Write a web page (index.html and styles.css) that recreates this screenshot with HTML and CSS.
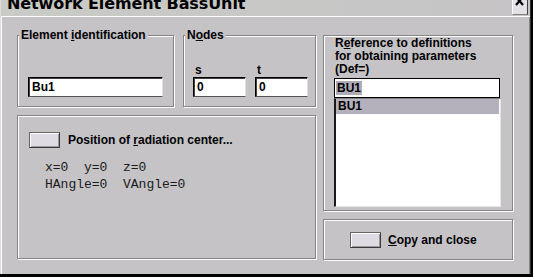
FILE: index.html
```html
<!DOCTYPE html>
<html lang="en">
<head>
    <meta charset="UTF-8">
    <title>Network Element BassUnit</title>
    <link rel="stylesheet" href="styles.css">
</head>
<body>
    <div class="window">
        <div class="titlebar">
            <span class="title">Network Element BassUnit</span>
            <span class="close">
                <svg width="14" height="14" viewBox="0 0 14 14"><path d="M3 -3 L10 5 M10 -3 L3 5" stroke="#000" stroke-width="2.2" fill="none"/></svg>
            </span>
        </div>

        <div class="content">
            <div class="left">
                <div class="top-row">
                    <div class="group group-id">
                        <div class="legend">Element <u>i</u>dentification</div>
                        <div class="field field-id">Bu1</div>
                    </div>
                    <div class="group group-nodes">
                        <div class="legend">N<u>o</u>des</div>
                        <div class="nodes">
                            <div class="node">
                                <span class="node-label">s</span>
                                <div class="field field-node">0</div>
                            </div>
                            <div class="node">
                                <span class="node-label">t</span>
                                <div class="field field-node">0</div>
                            </div>
                        </div>
                    </div>
                </div>

                <div class="group group-pos">
                    <div class="btn-row">
                        <span class="btn"></span>
                        <span>Position of <u>r</u>adiation center...</span>
                    </div>
                    <pre class="coords">x=0  y=0  z=0
HAngle=0  VAngle=0</pre>
                </div>
            </div>

            <div class="right">
                <div class="group group-ref">
                    <div class="ref-text">R<u>e</u>ference to definitions<br>for obtaining parameters<br>(Def=)</div>
                    <div class="field field-ref"><span class="sel">BU1</span></div>
                    <div class="listbox">
                        <div class="item selected">BU1</div>
                    </div>
                </div>
                <div class="group group-copy">
                    <span class="btn"></span>
                    <span><u>C</u>opy and close</span>
                </div>
            </div>
        </div>
    </div>
</body>
</html>
```

FILE: styles.css
```css
* {
    box-sizing: border-box;
}

body {
    margin: 0;
    background: #000;
    overflow: hidden;
    font-family: 'Liberation Sans', Arial, sans-serif;
    font-size: 12px;
    font-weight: bold;
    color: #000;
}

.window {
    width: 531px;
    height: 274px;
    background: #c5c3c6;
    border-left: 1px solid #dcdcdc;
    border-right: 1px solid #303030;
    box-shadow: inset 1px 0 0 #fff, inset -1px 0 0 #8a888a;
}

.titlebar {
    display: flex;
    height: 17px;
    background: linear-gradient(to right, #c9cbc6, #c6c4c6);
    border-bottom: 1px solid #fff;
    overflow: hidden;
}

.title {
    font-family: 'DejaVu Sans', sans-serif;
    font-size: 16px;
    font-weight: bold;
    line-height: 7px;
    padding-left: 6px;
    letter-spacing: -0.1px;
}

.close {
    margin-left: auto;
    margin-right: 2px;
    width: 16px;
    height: 15px;
    background: #e3e0e8;
    border-left: 1px solid #fff;
    border-right: 1px solid #404040;
    border-bottom: 1px solid #808080;
    display: flex;
    justify-content: center;
}

.content {
    display: flex;
    gap: 7px;
    padding: 18px 0 0 16px;
}

.left {
    width: 299px;
}

.right {
    width: 190px;
}

.group {
    border: 1px solid #878487;
    box-shadow: inset 1px 1px 0 #fff, 1px 1px 0 #fff;
}

.legend {
    width: fit-content;
    margin: -7px 0 0 1px;
    padding: 0 2px;
    line-height: 13px;
    background: #c5c3c6;
}

.top-row {
    display: flex;
    gap: 9px;
    height: 72px;
    margin-bottom: 8px;
}

.group-id {
    width: 157px;
}

.group-nodes {
    width: 133px;
}

.field {
    height: 20px;
    background: #fff;
    border-top: 1px solid #000;
    border-left: 1px solid #000;
    border-right: 1px solid #e0e0e0;
    border-bottom: 1px solid #555;
    box-shadow: inset 1px 1px 0 #404040;
    padding-left: 3px;
    line-height: 18px;
}

.field-id {
    width: 135px;
    margin: 35px 0 0 10px;
}

.nodes {
    display: flex;
    gap: 9px;
    margin: 22px 0 0 9px;
}

.node {
    display: flex;
    flex-direction: column;
}

.node-label {
    line-height: 13px;
    padding-left: 2px;
}

.field-node {
    width: 53px;
}

.group-pos {
    height: 144px;
    padding: 16px 0 0 11px;
}

.btn-row {
    display: flex;
    align-items: center;
    gap: 8px;
}

.btn {
    display: inline-block;
    width: 31px;
    height: 16px;
    background: #dedbe2;
    border: 1px solid #3a3a3a;
    border-top-color: #666;
    border-left-color: #666;
    box-shadow: inset 1px 1px 0 #fff, inset -1px -1px 0 #9a989c;
}

.coords {
    margin: 11px 0 0 16px;
    font-family: 'Liberation Mono', 'Courier New', monospace;
    font-size: 13px;
    font-weight: normal;
    line-height: 17px;
    color: #1a1a1a;
}

.group-ref {
    height: 176px;
    padding: 1px 0 0 10px;
}

.ref-text {
    line-height: 13px;
    padding-left: 1px;
}

.field-ref {
    width: 166px;
    margin-top: 2px;
    border: 1px solid #000;
    box-shadow: none;
    padding-left: 1px;
}

.sel {
    background: #aeabb6;
    padding: 0 1px;
}

.listbox {
    width: 167px;
    height: 109px;
    background: #fff;
    border-top: 1px solid #808080;
    border-left: 2px solid #1a1a1a;
    border-right: 1px solid #e6e6e6;
    border-bottom: 1px solid #e6e6e6;
}

.item {
    height: 15px;
    line-height: 15px;
    padding-left: 2px;
    margin-right: 1px;
}

.selected {
    background: #b4b1bc;
}

.group-copy {
    display: flex;
    align-items: center;
    gap: 7px;
    height: 41px;
    margin-top: 8px;
    padding: 0 0 0 26px;
}
```
